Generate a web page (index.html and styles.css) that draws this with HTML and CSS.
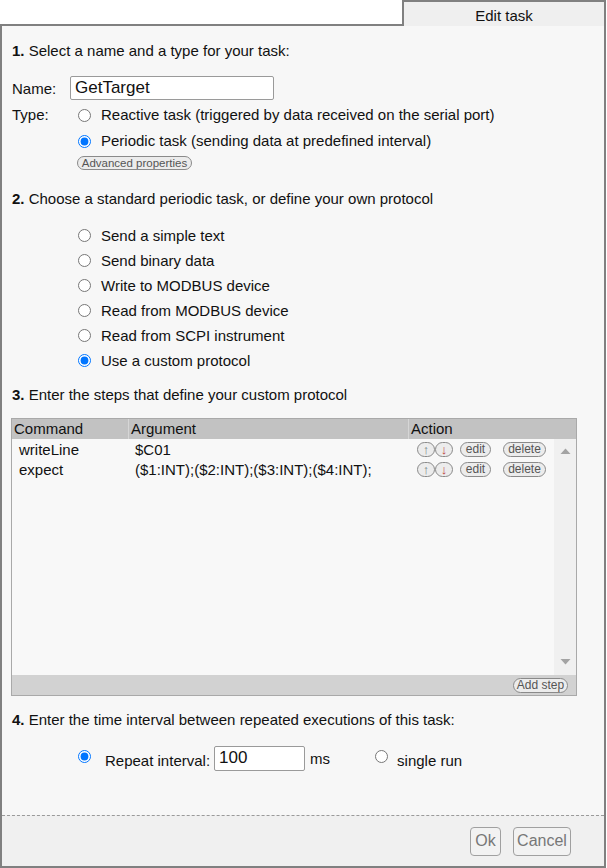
FILE: index.html
```html
<!DOCTYPE html>
<html>
<head>
<meta charset="utf-8">
<link rel="stylesheet" href="styles.css">
</head>
<body>
<div class="page">
  <div class="tabbar">
    <div class="tabfill"></div>
    <div class="tab">Edit task</div>
  </div>
  <div class="panel">
    <div class="content">
      <div class="step s1"><b>1.</b> Select a name and a type for your task:</div>
      <div class="namerow">
        <span class="lbl">Name:</span>
        <input class="txt name" type="text" value="GetTarget">
      </div>
      <div class="typerow">
        <span class="lbl typelbl">Type:</span>
        <div class="typeopts">
          <label class="opt"><input type="radio" name="t"><span>Reactive task (triggered by data received on the serial port)</span></label>
          <label class="opt"><input type="radio" name="t" checked><span>Periodic task (sending data at predefined interval)</span></label>
          <button class="pill adv">Advanced properties</button>
        </div>
      </div>
      <div class="step s2"><b>2.</b> Choose a standard periodic task, or define your own protocol</div>
      <div class="protos">
        <label class="opt"><input type="radio" name="p"><span>Send a simple text</span></label>
        <label class="opt"><input type="radio" name="p"><span>Send binary data</span></label>
        <label class="opt"><input type="radio" name="p"><span>Write to MODBUS device</span></label>
        <label class="opt"><input type="radio" name="p"><span>Read from MODBUS device</span></label>
        <label class="opt"><input type="radio" name="p"><span>Read from SCPI instrument</span></label>
        <label class="opt"><input type="radio" name="p" checked><span>Use a custom protocol</span></label>
      </div>
      <div class="step s3"><b>3.</b> Enter the steps that define your custom protocol</div>
      <div class="table">
        <div class="thead">
          <div class="c1">Command</div>
          <div class="c2">Argument</div>
          <div class="c3">Action</div>
        </div>
        <div class="tbody">
          <div class="rows">
            <div class="row">
              <div class="c1">writeLine</div>
              <div class="c2">$C01</div>
              <div class="c3 acts">
                <span class="arrows"><button class="pill arr up">↑</button><button class="pill arr dn">↓</button></span>
                <button class="pill edit">edit</button>
                <button class="pill del">delete</button>
              </div>
            </div>
            <div class="row">
              <div class="c1">expect</div>
              <div class="c2">($1:INT);($2:INT);($3:INT);($4:INT);</div>
              <div class="c3 acts">
                <span class="arrows"><button class="pill arr up">↑</button><button class="pill arr dn">↓</button></span>
                <button class="pill edit">edit</button>
                <button class="pill del">delete</button>
              </div>
            </div>
          </div>
          <div class="scroll">
            <svg width="11" height="6" viewBox="0 0 11 6"><path d="M0.5 6 L5.5 0.5 L10.5 6 Z" fill="#a3a3a3"/></svg>
            <svg width="11" height="6" viewBox="0 0 11 6"><path d="M0.5 0 L5.5 5.5 L10.5 0 Z" fill="#a3a3a3"/></svg>
          </div>
        </div>
        <div class="tfoot"><button class="pill addstep">Add step</button></div>
      </div>
      <div class="step s4"><b>4.</b> Enter the time interval between repeated executions of this task:</div>
      <div class="interval">
        <input class="r1" type="radio" name="i" checked>
        <span class="rlbl">Repeat interval:</span>
        <input class="txt ms" type="text" value="100">
        <span class="unit">ms</span>
        <input class="r2" type="radio" name="i">
        <span class="single">single run</span>
      </div>
    </div>
    <div class="footer">
      <button class="fbtn ok">Ok</button>
      <button class="fbtn cancel">Cancel</button>
    </div>
  </div>
</div>
</body>
</html>
```

FILE: styles.css
```css
* { box-sizing: border-box; }
html, body { margin: 0; padding: 0; background: #ffffff; }
body { font-family: "Liberation Sans", Arial, sans-serif; font-size: 15px; color: #111; }

.page { width: 606px; }

.tabbar { display: flex; height: 26px; }
.tabfill { flex: 1; border-bottom: 2px solid #808080; }
.tab {
  width: 204px; height: 26px;
  border: 2px solid #808080; border-bottom: none;
  background: #efefef;
  display: flex; align-items: center; justify-content: center;
  font-size: 15px; padding-top: 3px;
}

.panel {
  border: 2px solid #808080; border-top: none;
  background: #f7f7f7;
  height: 842px;
  display: flex; flex-direction: column;
}
.content { flex: 1; padding: 16px 0 0 10px; }

.step { line-height: 18px; }
.step b { font-weight: bold; }
.s2 { margin-top: 20px; }
.s3 { margin-top: 13px; }
.s4 { margin-top: 15px; }

.namerow { display: flex; align-items: center; margin-top: 16px; height: 24px; }
.lbl { width: 58px; }
.txt {
  font-family: "Liberation Sans", Arial, sans-serif; font-size: 17px;
  border: 1px solid #9a9a9a; border-radius: 2px; background: #fff;
  padding: 0 0 0 4px; height: 24px; color: #111; outline: none;
}
.name { width: 204px; }

.typerow { display: flex; margin-top: 2px; }
.typelbl { width: 66px; line-height: 26px; }
.typeopts { display: flex; flex-direction: column; align-items: flex-start; }
.opt { display: flex; align-items: center; height: 25px; line-height: 18px; }
.typeopts .opt { height: 26px; }
.opt input { margin: 0 10px 0 0; width: 13px; height: 13px; }

.pill {
  font-family: "Liberation Sans", Arial, sans-serif; font-size: 12px; color: #555;
  background: #ececec; border: 1px solid #8a8a8a; border-radius: 8px;
  padding: 0 5px; height: 15px; line-height: 13px; cursor: default;
}
.pill.adv { margin-top: 2px; margin-left: -1px; font-size: 11.5px; width: 115px; padding: 0; height: 14px; line-height: 12px; }

.protos { display: flex; flex-direction: column; padding-left: 66px; margin-top: 15px; }

.table {
  margin-top: 14px; width: 566px; margin-left: -1px;
  border: 1px solid #a9a9a9; background: #f8f8f8;
}
.thead { display: flex; height: 20px; background: #c2c2c2; line-height: 20px; }
.thead .c1 { width: 117px; padding-left: 2px; border-right: 1px solid #d6d6d6; }
.thead .c2 { width: 280px; padding-left: 2px; border-right: 1px solid #d6d6d6; }
.thead .c3 { flex: 1; padding-left: 2px; }

.tbody { display: flex; height: 236px; }
.rows { flex: 1; padding-top: 0; }
.row { display: flex; height: 20px; align-items: center; }
.row .c1 { width: 117px; padding-left: 7px; }
.row .c2 { width: 280px; padding-left: 6px; }
.row .c3 { flex: 1; }
.acts { display: flex; align-items: center; padding-left: 8px; }
.arrows { display: flex; }
.pill.arr { width: 18px; padding: 0; font-size: 13px; }
.up { color: #6f7f7f; }
.dn { color: #c04848; }
.acts .edit { margin-left: 7px; width: 31px; padding: 0; }
.acts .del { margin-left: 12px; width: 43px; padding: 0; }

.scroll {
  width: 22px; background: #f0f0f0;
  display: flex; flex-direction: column; justify-content: space-between; align-items: center;
  padding: 9px 0 10px;
}

.tfoot { height: 20px; background: #d2d2d2; display: flex; justify-content: flex-end; align-items: center; padding-right: 8px; }
.pill.addstep { width: 55px; padding: 0; }

.interval { display: flex; align-items: center; margin-top: 16px; padding-left: 66px; height: 26px; }
.interval input[type=radio] { margin: 0; width: 13px; height: 13px; }
.r1 { margin-top: -3px !important; }
.rlbl { margin-left: 14px; margin-top: 4px; }
.ms { width: 91px; height: 25px; margin-left: 4px; }
.unit { margin-left: 5px; margin-top: 0; }
.r2 { margin-left: 45px !important; margin-top: -4px !important; }
.single { margin-left: 9px; margin-top: 5px; }

.footer {
  height: 51px; border-top: 1px dashed #9a9a9a; background: #f0f0f0;
  display: flex; justify-content: flex-end; align-items: center; padding-right: 33px; gap: 12px;
}
.fbtn {
  font-family: "Liberation Sans", Arial, sans-serif; font-size: 16px; color: #777;
  background: #f2f2f2; border: 1px solid #a0a0a0; border-radius: 4px;
  height: 29px; padding: 0 5px;
}
.ok { width: 31px; padding: 0; }
.cancel { width: 58px; padding: 0; }
```
